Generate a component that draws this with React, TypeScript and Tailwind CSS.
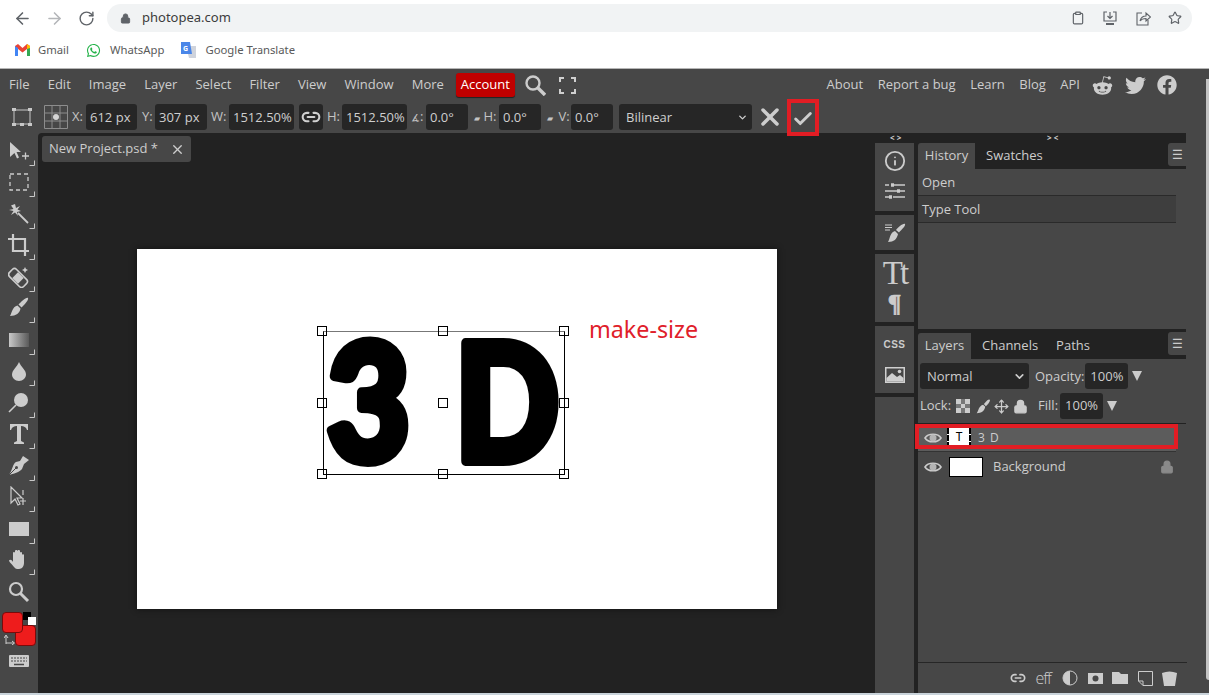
import { Lock, RotateCw, ArrowLeft, ArrowRight, Star, Clipboard, ChevronDown, X, Check, Info, Move, Link2 } from "lucide-react";
import { FaRedditAlien, FaTwitter, FaFacebook, FaWhatsapp } from "react-icons/fa";

const menus = ["File", "Edit", "Image", "Layer", "Select", "Filter", "View", "Window", "More"];
const links = ["About", "Report a bug", "Learn", "Blog", "API"];

const Corner = () => (
  <svg className="absolute right-[3px] bottom-[1px]" width="6" height="6" viewBox="0 0 6 6">
    <path d="M5.5 0.5V5.5H0.5" fill="none" stroke="#c8c8c8" strokeWidth="1" />
  </svg>
);

const Tool = ({ children, corner = true }: { children: React.ReactNode; corner?: boolean }) => (
  <div className="relative w-[38px] h-[31.5px] flex justify-center items-center pr-[1px]">
    <svg width="22" height="22" viewBox="0 0 22 22" fill="#cccccc">{children}</svg>
    {corner && <Corner />}
  </div>
);

const Field = ({ label, value, ml, lw, vw }: { label: React.ReactNode; value: string; ml: string; lw: string; vw: string }) => (
  <div className={`flex items-center ${ml}`}>
    <span className={`text-[13px] text-[#c4c4c4] whitespace-nowrap ${lw}`}>{label}</span>
    <span className={`h-[26px] ${vw} bg-[#262626] rounded-[3px] flex items-center pl-[4px] pt-[1px] text-[13px] text-[#cfcfcf] overflow-hidden whitespace-nowrap`}>{value}</span>
  </div>
);

const Handle = ({ cls }: { cls: string }) => (
  <div className={`absolute w-[10px] h-[10px] border border-black ${cls}`} />
);

const Block = ({ cls, children }: { cls: string; children?: React.ReactNode }) => (
  <div className={`w-[39px] bg-[#474747] flex flex-col items-center ${cls}`}>{children}</div>
);

const Menu = ({ top }: { top: string }) => (
  <span className={`absolute right-0 ${top} w-[18px] h-[23px] bg-[#474747] rounded-l-[3px] flex items-center justify-center text-[12px] text-[#cccccc]`}>☰</span>
);

const Eye = () => (
  <svg width="18" height="14" viewBox="0 0 18 14">
    <path d="M1 7C4 2 14 2 17 7 14 12 4 12 1 7Z" fill="none" stroke="#cccccc" strokeWidth="1.6" />
    <circle cx="9" cy="7" r="3.5" fill="#b5b5b5" />
  </svg>
);

const Tri = () => (
  <svg className="ml-[4px]" width="10" height="10" viewBox="0 0 10 10"><path d="M0 0H10L5 10Z" fill="#cccccc" /></svg>
);

export default function App() {
  return (
    <div className="w-[1209px] h-[695px] overflow-hidden flex flex-col bg-white font-['Open_Sans',sans-serif]">
      {/* browser */}
      <div className="h-[36px] flex items-center pl-[13px] shrink-0">
        <ArrowLeft size={19} className="text-[#5f6368]" />
        <ArrowRight size={19} className="text-[#b4b6b9] ml-[13px]" />
        <RotateCw size={17} className="text-[#5f6368] ml-[14px]" />
        <div className="ml-[12px] w-[1085px] h-[28px] bg-[#f1f3f4] rounded-full flex items-center pl-[13px] pr-[10px]">
          <Lock size={11} fill="#5f6368" className="text-[#5f6368]" />
          <span className="ml-[11px] text-[13px] text-[#3c3c3c] font-['Noto_Sans',sans-serif]">photopea.com</span>
          <div className="ml-auto flex items-center gap-[17.5px] text-[#5f6368]">
            <Clipboard size={14} />
            <svg width="16" height="16" viewBox="0 0 16 16" fill="none" stroke="#5f6368" strokeWidth="1.2"><path d="M5 2H2V11H14V2H11M8 2V8M5.5 6L8 8.5 10.5 6" /><path d="M4 14H12" strokeWidth="2" /></svg>
            <svg width="15" height="15" viewBox="0 0 15 15" fill="none" stroke="#5f6368" strokeWidth="1.1"><path d="M6 2H1V14H12V9" /><path d="M4 10C5 6 7 5 10 5V2L14.500 6 10 10V7.500C8 7.500 5.500 8 4 10Z" /></svg>
            <Star size={14} />
          </div>
        </div>
      </div>
      <div className="h-[32px] pb-[4px] flex items-center pl-[15px] text-[11.3px] text-[#5a5a5a] shrink-0 font-['Noto_Sans',sans-serif]">
        <svg width="15" height="12" viewBox="0 0 15 12"><path d="M0 2V12H3V5L7.5 8.5 12 5V12H15V2L12 0 7.5 4 3 0Z" fill="#ea4335" /><path d="M0 2V12H3V4Z" fill="#4285f4" /><path d="M12 4V12H15V2Z" fill="#34a853" /><path d="M12 0L15 2V4L12 5Z" fill="#fbbc04" /></svg>
        <span className="ml-[8px]">Gmail</span>
        <FaWhatsapp size={15} className="text-[#25b34a] ml-[17px]" />
        <span className="ml-[9px]">WhatsApp</span>
        <svg className="ml-[16px]" width="16" height="16" viewBox="0 0 16 16"><path d="M6 4H16V16H9Z" fill="#cfd3dc" /><path d="M1 0H10L12 12H1Z" fill="#4a86e8" /><text x="3" y="9" fontSize="7" fontWeight="700" fill="#ffffff">G</text></svg>
        <span className="ml-[9px]">Google Translate</span>
      </div>

      {/* photopea */}
      <div className="flex-1 min-h-0 flex flex-col bg-[#474747] border-t border-[#b5b5b5] border-b-2 border-b-[#c9d3da] relative">
        <div className="absolute right-0 top-[10px] bottom-[13px] w-[3px] bg-[#c4c4c4] rounded-bl-[3px]" />
        <div className="h-[32px] flex items-center pl-[9px] shrink-0 text-[13px] text-[#cdcdcd]">
          {menus.map((m) => (
            <span key={m} className="mr-[18.1px]">{m}</span>
          ))}
          <span className="-ml-[6.2px] h-[24px] w-[59px] flex items-center justify-center bg-[#c00000] rounded-[3px] text-white shadow-[0_1px_1px_#222]">Account</span>
          <svg className="ml-[10px]" width="21" height="21" viewBox="0 0 21 21" fill="none" stroke="#cccccc"><circle cx="8" cy="8" r="6.500" strokeWidth="2.400" /><path d="M12.500 12.500L20 20" strokeWidth="3.400" /></svg>
          <svg className="ml-[13px]" width="17" height="17" viewBox="0 0 17 17" fill="none" stroke="#d0d0d0" strokeWidth="2"><path d="M1 5V1H5M12 1H16V5M16 12V16H12M5 16H1V12" /></svg>
          <div className="ml-auto flex items-center mr-[32px]">
            {links.map((m) => (
              <span key={m} className="ml-[14.5px]">{m}</span>
            ))}
            <FaRedditAlien size={21} className="ml-[12px]" />
            <FaTwitter size={21} className="ml-[12px]" />
            <FaFacebook size={20} className="ml-[11px]" />
          </div>
        </div>

        <div className="h-[32px] flex items-center shrink-0 pl-[12px]">
          <svg width="20" height="18" viewBox="0 0 20 18" fill="#c8c8c8"><path d="M2 2H18V16H2Z" fill="none" stroke="#c8c8c8" strokeWidth="1" /><rect x="0" y="0" width="4" height="3" /><rect x="16" y="0" width="4" height="3" /><rect x="0" y="15" width="4" height="3" /><rect x="16" y="15" width="4" height="3" /><rect x="8" y="15" width="4" height="3" /></svg>
          <svg className="ml-[12px]" width="24" height="24" viewBox="0 0 24 24" fill="none" stroke="#8d8d8d" strokeWidth="1"><path d="M0.5 0.5H23.5V23.500H0.5ZM8 0.5V23.500M16 0.5V23.500M0.5 8H23.500M0.5 16H23.500" /><circle cx="12" cy="12" r="3" fill="#d4d4d4" stroke="none" /></svg>
          <Field label="X:" value="612 px" ml="ml-[4px]" lw="w-[14px]" vw="w-[51px]" />
          <Field label="Y:" value="307 px" ml="ml-[5px]" lw="w-[13px]" vw="w-[52px]" />
          <Field label="W:" value="1512.50%" ml="ml-[4px]" lw="w-[18px]" vw="w-[65px]" />
          <span className="ml-[5px] w-[24px] h-[26px] bg-[#262626] rounded-[3px] flex items-center justify-center">
            <Link2 size={20} strokeWidth={2.5} className="text-[#d0d0d0]" />
          </span>
          <Field label="H:" value="1512.50%" ml="ml-[4px]" lw="w-[15px]" vw="w-[65px]" />
          <Field label={<span><span className="text-[10px]">∡</span>:</span>} value="0.0°" ml="ml-[4px]" lw="w-[15px]" vw="w-[42px]" />
          <Field label={<span><span className="text-[8px]">▰</span> H:</span>} value="0.0°" ml="ml-[6px]" lw="w-[25px]" vw="w-[42px]" />
          <Field label={<span><span className="text-[8px]">▰</span> <span className="ml-[2px]">V:</span></span>} value="0.0°" ml="ml-[6px]" lw="w-[24px]" vw="w-[42px]" />
          <div className="ml-[6px] w-[133px] h-[26px] bg-[#262626] rounded-[3px] flex items-center justify-between pl-[7px] pr-[4px] pt-[1px] text-[13px] text-[#cfcfcf]">
            Bilinear
            <ChevronDown size={11} strokeWidth={3} />
          </div>
          <X size={28} strokeWidth={3} className="text-[#cdcdcd] ml-[4px]" />
          <div className="relative z-10 ml-[3px] w-[32px] h-[37px] border-[4px] border-[#e21d24] flex items-center justify-center">
            <Check size={22} strokeWidth={3.2} className="text-[#cdcdcd] mt-[3px]" />
          </div>
        </div>

        <div className="flex-1 min-h-0 flex">
          {/* tools */}
          <div className="w-[38px] shrink-0 flex flex-col pt-[2px]">
            <Tool><path d="M2 2L13 12H8.500L11 17.500 9 18.500 6.500 13 2 17Z" /><path d="M14 16H21M17.500 12.500V19.500" stroke="#ccc" strokeWidth="1.300" /></Tool>
            <Tool><path d="M2 3H20V19H2Z" fill="none" stroke="#ccc" strokeWidth="1.300" strokeDasharray="4 3" /></Tool>
            <Tool><path d="M7 1L8 5 12 3 9.500 6.500 13 8 9 9 10 13 7 9.500 3 12 5.500 8 1 7 5.500 6 3 2.500Z" /><path d="M10 10L20 20" stroke="#ccc" strokeWidth="1.800" /></Tool>
            <Tool><path d="M5 0V17H21M0 5H17V22" fill="none" stroke="#ccc" strokeWidth="2.200" /></Tool>
            <Tool><g transform="rotate(45 10 12)"><rect x="0" y="7" width="20" height="10" rx="3" fill="none" stroke="#ccc" strokeWidth="1.600" /><rect x="6" y="8" width="8" height="8" /></g><path d="M17 1L18 3 20 4 18 5 17 7 16 5 14 4 16 3Z" /></Tool>
            <Tool><path d="M20 1C21 3 16 8 13.500 10.500L10.500 7.500C13 5 18 0 20 1Z" /><path d="M9.500 8.500L12.500 11.500C12 16 8 19 2 19 4 16 4 10 9.500 8.500Z" /></Tool>
            <Tool><defs><linearGradient id="grad"><stop offset="0" stopColor="#c8c8c8" /><stop offset="1" stopColor="#5a5a5a" /></linearGradient></defs><rect x="1" y="4" width="20" height="14" fill="url(#grad)" /></Tool>
            <Tool><path d="M11 2C13 7 18 10 18 14.500 18 18 15 21 11 21 7 21 4 18 4 14.500 4 10 9 7 11 2Z" /></Tool>
            <Tool><circle cx="13" cy="8" r="7" /><path d="M8 13L1 20" stroke="#ccc" strokeWidth="1.600" /></Tool>
            <Tool><path d="M2 1H20V7H19C18 4 16 3 13 3V18L16 19.500V21H6V19.500L9 18V3C6 3 4 4 3 7H2Z" /></Tool>
            <Tool><path d="M21 5L15 1 12 6 8 7C5 8 4 16 1 20 5 19 12 17 14 14L16 9Z" /><path d="M1 20L8 13" stroke="#474747" strokeWidth="1" /><circle cx="8.500" cy="12.500" r="1.500" fill="#474747" /></Tool>
            <Tool><path d="M3 1V17L7 13 10 19 12 18 9 12H14ZM15 4V9M15 12V19M12 15H18" fill="none" stroke="#ccc" strokeWidth="1.200" /></Tool>
            <Tool><rect x="1" y="4" width="20" height="14" /></Tool>
            <Tool>
              <path d="M6 18C4 15 1 13 1 11.500 2 10 4 11 5 13V4C5 2.500 7 2.500 7 4V2C7 .5 9.500 .5 9.500 2V2C9.500 .5 12 .5 12 2V4C12 2.500 14 2.500 14 4V6C14 5 16 5 16 6V14C16 17 14 20 11 20H9C8 20 7 19 6 18Z" />
            </Tool>
            <div className="w-[38px] h-[31.5px] flex justify-center items-center">
              <svg width="22" height="22" viewBox="0 0 22 22" fill="none" stroke="#ccc"><circle cx="8" cy="8" r="6" strokeWidth="2.200" /><path d="M12.500 12.500L20 20" strokeWidth="3" /></svg>
            </div>
            <div className="relative h-[36px] mt-[3.5px] shrink-0">
              <div className="absolute left-[23px] top-[1px] w-[8px] h-[8px] bg-black" />
              <div className="absolute left-[28px] top-[6px] w-[8px] h-[8px] bg-white" />
              <div className="absolute left-[15px] top-[14px] w-[21px] h-[21px] bg-[#ee1c1c] border border-[#7a0a0a] rounded-[4px]" />
              <div className="absolute left-[2px] top-[1px] w-[21px] h-[21px] bg-[#ee1c1c] border border-[#7a0a0a] rounded-[4px]" />
              <svg className="absolute left-[4px] top-[23px]" width="11" height="11" viewBox="0 0 11 11" fill="none" stroke="#ccc"><path d="M2 10V2M0 4L2 1 4 4M2 9H10M8 7L10.500 9 8 11" /></svg>
            </div>
            <div className="mt-[8px] flex justify-center pr-[1px]">
              <svg width="20" height="12" viewBox="0 0 20 12"><rect width="20" height="12" rx="1" fill="#ccc" /><path d="M2 3H18M2 6H18" stroke="#474747" strokeDasharray="2 1" /><path d="M5 9.500H15" stroke="#474747" strokeWidth="1.500" /></svg>
            </div>
          </div>

          {/* workspace */}
          <div className="w-[837px] shrink-0 bg-[#222222] rounded-tl-[4px] pt-[3px] pl-[4px]">
            <div className="w-[149px] h-[26px] bg-[#474747] rounded-[3px] flex items-center pl-[7px] pr-[6px] text-[13px] text-[#cdcdcd] justify-between">
              New Project.psd *
              <X size={15} strokeWidth={2.2} />
            </div>
            <div className="relative ml-[95px] mt-[87px] w-[640px] h-[360px] bg-white shadow-[0_0_6px_#111]">
              <div className="absolute left-[186px] top-[82px] w-[242px] h-[144px] border border-black border-t-[#777]">
                <svg className="absolute left-0 top-0 overflow-visible" width="240" height="142" viewBox="0 0 240 142">
                  <g fontFamily="Lato, sans-serif" fontWeight="900" fontSize="163" textAnchor="middle" fill="#000000" stroke="#000000" strokeWidth="10" strokeLinejoin="round">
                    <text transform="translate(44.5 129) scale(0.88 1)">3</text>
                    <text transform="translate(183 129) scale(0.84 1)">D</text>
                  </g>
                </svg>
                <Handle cls="-left-[7px] -top-[6px]" />
                <Handle cls="left-[114px] -top-[6px]" />
                <Handle cls="left-[235px] -top-[6px]" />
                <Handle cls="-left-[7px] top-[66px]" />
                <Handle cls="left-[114px] top-[66px] bg-white" />
                <Handle cls="left-[235px] top-[66px]" />
                <Handle cls="-left-[7px] top-[137px]" />
                <Handle cls="left-[114px] top-[137px]" />
                <Handle cls="left-[235px] top-[137px]" />
              </div>
              <span className="absolute left-[452px] top-[65px] text-[23.300px] leading-[30px] text-[#e0202a] font-['Noto_Sans',sans-serif]">make-size</span>
            </div>
          </div>

          {/* right */}
          <div className="w-[311px] shrink-0 bg-[#222222] flex flex-col">
            <div className="h-[10px] relative text-[8px] leading-[10px] text-[#cccccc] font-bold shrink-0">
              <span className="absolute left-[15px]">&lt; &gt;</span>
              <span className="absolute left-[172px]">&gt; &lt;</span>
            </div>
            <div className="flex-1 min-h-0 flex">
              <div className="w-[43px] flex flex-col gap-[4px] shrink-0">
                <Block cls="h-[68px] pt-[7px] gap-[10px]">
                  <Info size={22} className="text-[#cccccc]" />
                  <svg width="22" height="18" viewBox="0 0 22 18" stroke="#cccccc" strokeWidth="1.600"><path d="M1 3H21M1 9H21M1 15H21" /><path d="M6 1V5M15 7V11M8 13V17" strokeWidth="2" stroke="#474747" /><path d="M7 3H10M13 9H16M5 15H8" strokeWidth="3.500" /></svg>
                </Block>
                <Block cls="h-[35px] justify-center">
                  <svg width="22" height="22" viewBox="0 0 22 22" fill="#ccc"><path d="M21 2C22 4 17 8 15 10.500L12 8C14 5.500 19 1 21 2Z" /><path d="M11 9L14 12C13 17 10 20 4 20 6 17 6 10 11 9Z" /><path d="M1 3H8M1 5.500H8M1 8H6" stroke="#ccc" /></svg>
                </Block>
                <Block cls="h-[68px] pt-[2px]">
                  <span className="font-['Liberation_Serif',serif] text-[33px] leading-[34px] tracking-[-3px] text-[#cccccc]">Tt</span>
                  <span className="font-['Liberation_Serif',serif] font-bold text-[25px] leading-[27px] text-[#cccccc] [-webkit-text-stroke:0.7px_#cccccc]">¶</span>
                </Block>
                <Block cls="h-[67px] pt-[13px] gap-[16px]">
                  <span className="text-[10px] leading-[12px] font-bold tracking-[0.5px] text-[#cccccc] font-['Liberation_Sans',sans-serif]">CSS</span>
                  <svg width="20" height="16" viewBox="0 0 20 16"><rect width="20" height="16" fill="#d0d0d0" /><rect x="1.500" y="1.500" width="17" height="13" fill="#474747" /><path d="M1.500 14.500V11L7 6 12 10 15 8 18.500 11V14.500Z" fill="#d0d0d0" /><circle cx="14.500" cy="4.500" r="1.800" fill="#d0d0d0" /></svg>
                </Block>
                <Block cls="flex-1" />
              </div>
              <div className="flex-1 min-w-0 flex flex-col">
                {/* history */}
                <div className="h-[26px] flex text-[13px] text-[#cdcdcd] relative shrink-0">
                  <span className="w-[57px] bg-[#474747] rounded-tl-[3px] flex items-center justify-center">History</span>
                  <span className="ml-[11px] flex items-center">Swatches</span>
                  <Menu top="top-0" />
                </div>
                <div className="h-[160px] bg-[#474747] text-[13px] text-[#cdcdcd] shrink-0">
                  <div className="h-[27px] w-[258px] pl-[4px] pt-[1px] flex items-center border-b border-[#2a2a2a]">Open</div>
                  <div className="h-[27px] w-[258px] pl-[4px] pt-[1px] flex items-center border-b border-[#2a2a2a] bg-[#3e3e3e]">Type Tool</div>
                </div>
                {/* layers */}
                <div className="h-[30px] pt-[4px] flex text-[13px] text-[#cdcdcd] relative shrink-0">
                  <span className="w-[53px] bg-[#474747] rounded-tl-[3px] flex items-center justify-center">Layers</span>
                  <span className="ml-[11px] flex items-center">Channels</span>
                  <span className="ml-[18px] flex items-center">Paths</span>
                  <Menu top="top-[3px]" />
                </div>
                <div className="flex-1 min-h-0 bg-[#474747] flex flex-col text-[13px] text-[#cdcdcd]">
                  <div className="h-[34px] flex items-center pl-[2px] shrink-0">
                    <span className="w-[109px] h-[26px] bg-[#262626] rounded-[3px] flex items-center justify-between pl-[7px] pr-[3px] pt-[1px]">Normal<ChevronDown size={13} strokeWidth={3} /></span>
                    <span className="ml-[6px] pt-[1px]">Opacity:</span>
                    <span className="ml-[1px] w-[43px] h-[26px] bg-[#262626] rounded-[3px] flex items-center justify-center pt-[1px]">100%</span>
                    <Tri />
                  </div>
                  <div className="h-[31px] pb-[4px] flex items-center pl-[2px] shrink-0 border-b border-[#222222] w-[268px]">
                    Lock:
                    <svg className="ml-[5px]" width="14" height="14" viewBox="0 0 14 14" fill="#ccc"><path d="M0 0H14V14H0Z" fill="#777" /><path d="M0 0H5V5H0ZM9 0H14V5H9ZM5 5H9V9H5ZM0 9H5V14H0ZM9 9H14V14H9Z" /></svg>
                    <svg className="ml-[6px]" width="15" height="15" viewBox="0 0 22 22" fill="#ccc"><path d="M20 1C22 3 17 8 14.500 10.500L11.500 7.500C14 5 18 -1 20 1Z" /><path d="M10.500 8.500L13.500 11.500C13 17 8 21 1 21 4 17 4 10 10.500 8.500Z" /></svg>
                    <Move size={15} className="ml-[3px] text-[#cccccc]" />
                    <Lock size={15} fill="#cccccc" className="ml-[4px] text-[#cccccc]" />
                    <span className="ml-[10px]">Fill:</span>
                    <span className="ml-[2px] w-[43px] h-[26px] bg-[#262626] rounded-[3px] flex items-center justify-center">100%</span>
                    <Tri />
                  </div>
                  <div className="relative h-[28px] w-[258px] bg-[#5c5c5c] flex items-center pl-[6px] shrink-0 border-b border-[#333333]">
                    <Eye />
                    <span className="ml-[5px] w-[24px] h-[20px] bg-white border-x-2 border-dashed border-black flex items-center justify-center text-black text-[12px] font-['Liberation_Mono',monospace]">T</span>
                    <span className="ml-[7px] text-[#cdcdcd] text-[12px] tracking-[1px]">3 D</span>
                    <div className="absolute -left-[3px] -right-[2px] top-0 h-[25px] border-[4px] border-[#e21d24]" />
                  </div>
                  <div className="h-[29px] w-[258px] flex items-center pl-[6px] shrink-0">
                    <Eye />
                    <span className="ml-[7px] w-[34px] h-[20px] bg-white border border-black" />
                    <span className="ml-[10px]">Background</span>
                    <Lock size={14} fill="#8a8a8a" className="ml-auto mr-[2px] text-[#8a8a8a]" />
                  </div>
                  <div className="flex-1" />
                  <div className="h-[31px] w-[269px] border-t border-[#262626] flex items-center justify-end pr-[10px] gap-[9.500px] shrink-0 text-[#cccccc]">
                    <Link2 size={16} strokeWidth={2.500} />
                    <span className="w-[17px] text-[16px] tracking-[-1px] font-light">eff</span>
                    <svg width="16" height="16" viewBox="0 0 16 16"><circle cx="8" cy="8" r="7" fill="none" stroke="#ccc" /><path d="M8 1A7 7 0 0 0 8 15Z" fill="#ccc" /></svg>
                    <svg width="15" height="11" viewBox="0 0 15 11"><rect width="15" height="11" fill="#ccc" /><circle cx="7.500" cy="5.500" r="3" fill="#474747" /></svg>
                    <svg width="16" height="12" viewBox="0 0 16 12" fill="#ccc"><path d="M0 0H7L9 2H16V12H0Z" /></svg>
                    <svg width="15" height="15" viewBox="0 0 15 15" fill="none" stroke="#ccc"><path d="M.5 .5H14.500V14.500H5L.5 10ZM.5 10H5V14.500" /></svg>
                    <svg width="15" height="15" viewBox="0 0 15 15" fill="#ccc"><path d="M0 2Q7.500 -1 15 2L13 15H2Z" /></svg>
                  </div>
                </div>
              </div>
            </div>
          </div>
          <div className="flex-1" />
        </div>
      </div>
    </div>
  );
}
